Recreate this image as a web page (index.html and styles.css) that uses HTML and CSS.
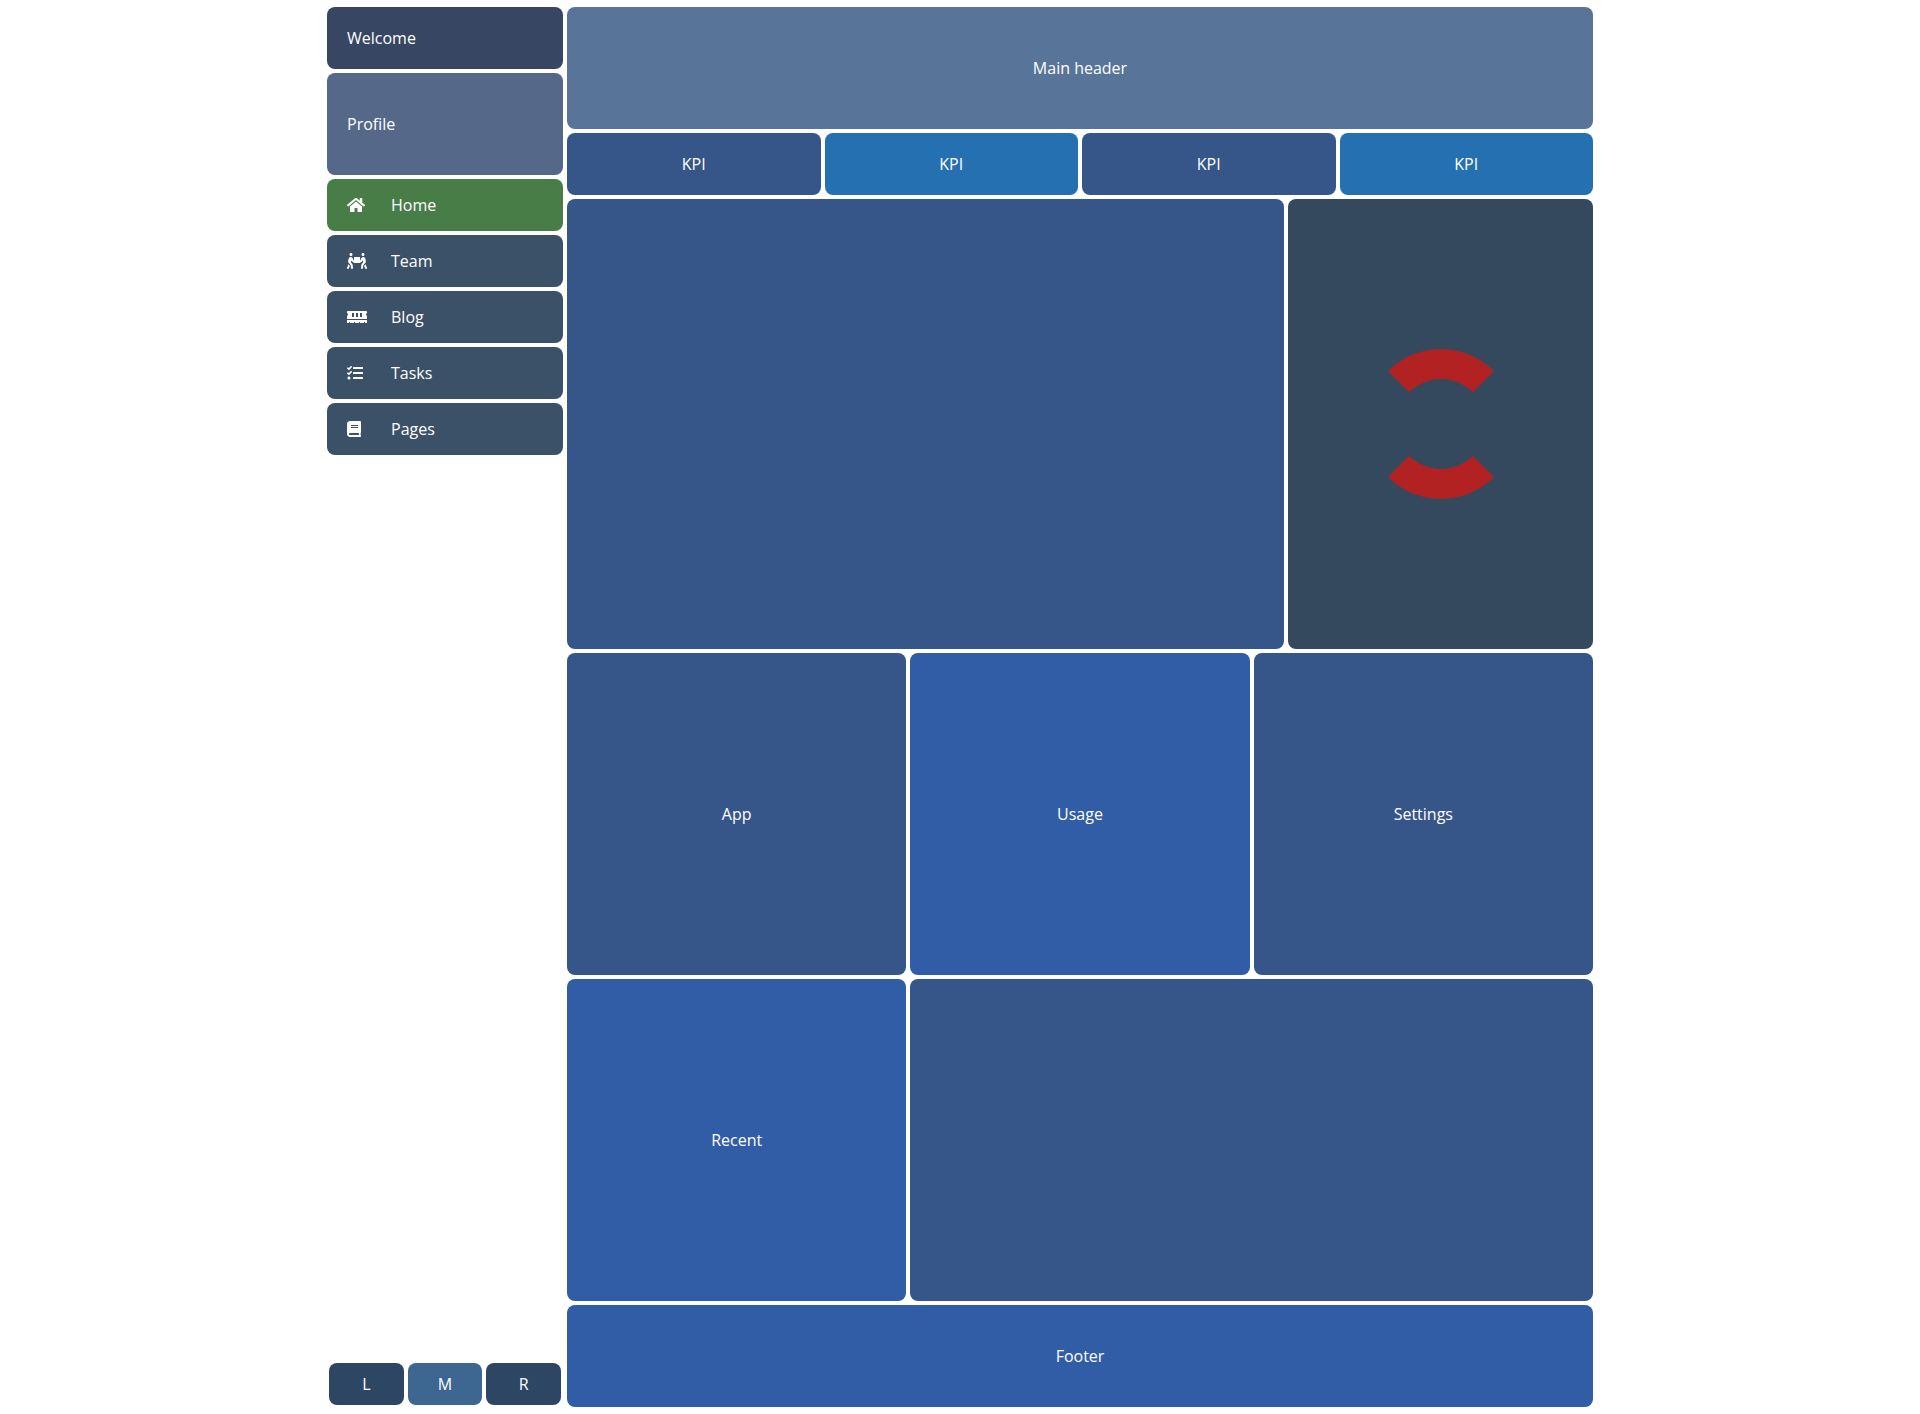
FILE: index.html
```html
<!DOCTYPE html>
<html lang="en">
<head>
  <meta charset="utf-8">
  <meta name="viewport" content="width=device-width, initial-scale=1">
  <title>Dashboard</title>
  <link rel="stylesheet" href="styles.css">
</head>
<body>
  <div class="page">
    <aside class="sidebar">
      <div class="tile tile-left welcome">Welcome</div>
      <div class="tile tile-left profile">Profile</div>
      <nav class="menu">
        <a class="menu-item active" href="#home">
          <span class="menu-icon"><svg width="18" height="16" viewBox="0 0 576 512" aria-hidden="true"><path d="M280.37 148.26L96 300.11V464a16 16 0 0 0 16 16l112.06-.29a16 16 0 0 0 15.92-16V368a16 16 0 0 1 16-16h64a16 16 0 0 1 16 16v95.64a16 16 0 0 0 16 16.05L464 480a16 16 0 0 0 16-16V300L295.67 148.26a12.19 12.19 0 0 0-15.3 0zM571.6 251.47L488 182.56V44.05a12 12 0 0 0-12-12h-56a12 12 0 0 0-12 12v72.61L318.47 43a48 48 0 0 0-61 0L4.34 251.47a12 12 0 0 0-1.6 16.9l25.5 31A12 12 0 0 0 45.15 301l235.22-193.74a12.19 12.19 0 0 1 15.3 0L530.9 301a12 12 0 0 0 16.9-1.6l25.5-31a12 12 0 0 0-1.7-16.93z"/></svg></span>
          Home
        </a>
        <a class="menu-item" href="#team">
          <span class="menu-icon"><svg width="20" height="16" viewBox="0 0 640 512" aria-hidden="true"><path d="M128 96c26.500 0 48-21.500 48-48S154.500 0 128 0 80 21.500 80 48s21.500 48 48 48zm384 0c26.500 0 48-21.500 48-48S538.500 0 512 0s-48 21.500-48 48 21.500 48 48 48zm125.700 372.100l-44-110-41.100 46.400-2 18.200 27.700 69.200c5 12.500 17 20.100 29.700 20.100 4 0 8-.7 11.900-2.300 16.400-6.600 24.400-25.200 17.800-41.600zm-34.200-209.800L585 178.100c-4.600-20-18.600-36.800-37.500-44.900-18.500-8-39-6.700-56.100 3.300-22.700 13.400-39.700 34.500-48.100 59.400L432 229.800 416 240v-96c0-8.800-7.200-16-16-16H240c-8.800 0-16 7.200-16 16v96l-16.100-10.200-11.300-33.900c-8.300-25-25.400-46-48.100-59.400-17.200-10-37.600-11.300-56.100-3.300-18.900 8.100-32.900 24.900-37.500 44.900l-18.400 80.200c-4.600 20 .7 41.200 14.400 56.700l67.200 75.900 10.100 92.600C130 499.800 143.800 512 160 512c1.200 0 2.300-.1 3.500-.2 17.600-1.900 30.200-17.700 28.300-35.300l-10.100-92.800c-1.500-13-6.900-25.100-15.600-35l-43.300-49 17.600-70.300 6.800 20.400c4.100 12.500 11.900 23.400 24.500 32.600l51.100 32.500c4.600 2.900 12.100 4.600 17.200 5h160c5.100-.4 12.600-2.100 17.200-5l51.100-32.500c12.600-9.200 20.400-20 24.500-32.600l6.800-20.400 17.600 70.300-43.300 49c-8.700 9.900-14.100 22-15.600 35l-10.100 92.800c-1.900 17.600 10.800 33.400 28.300 35.300 1.200.1 2.300.2 3.500.2 16.100 0 30-12.100 31.800-28.500l10.100-92.600 67.200-75.900c13.600-15.500 19-36.700 14.400-56.700zM46.300 358.100l-44 110c-6.600 16.400 1.400 35 17.800 41.600 16.800 6.600 35.100-1.700 41.600-17.800l27.700-69.200-2-18.200-41.100-46.400z"/></svg></span>
          Team
        </a>
        <a class="menu-item" href="#blog">
          <span class="menu-icon"><svg width="20" height="16" viewBox="0 0 640 512" aria-hidden="true"><path d="M640 130.940V96c0-17.670-14.330-32-32-32H32C14.330 64 0 78.330 0 96v34.940c18.600 6.610 32 24.190 32 45.060s-13.400 38.450-32 45.060V320h640v-98.940c-18.600-6.610-32-24.190-32-45.060s13.400-38.450 32-45.060zM224 256h-64V128h64v128zm128 0h-64V128h64v128zm128 0h-64V128h64v128zM0 448h64v-26.670c0-8.840 7.160-16 16-16s16 7.160 16 16V448h128v-26.670c0-8.840 7.160-16 16-16s16 7.160 16 16V448h128v-26.670c0-8.840 7.160-16 16-16s16 7.160 16 16V448h128v-26.670c0-8.840 7.160-16 16-16s16 7.160 16 16V448h64v-96H0v96z"/></svg></span>
          Blog
        </a>
        <a class="menu-item" href="#tasks">
          <span class="menu-icon"><svg width="16" height="16" viewBox="0 0 512 512" aria-hidden="true"><path d="M139.610 35.500a12 12 0 0 0-17 0L58.930 98.810l-22.700-22.120a12 12 0 0 0-17 0L3.530 92.410a12 12 0 0 0 0 17l47.590 47.400a12.780 12.780 0 0 0 17.610 0l15.590-15.620L156.520 69a12.090 12.090 0 0 0 .09-17zm0 159.190a12 12 0 0 0-17 0l-63.680 63.720-22.700-22.100a12 12 0 0 0-17 0L3.530 252a12 12 0 0 0 0 17L51 316.500a12.770 12.770 0 0 0 17.600 0l15.700-15.690 72.200-72.220a12 12 0 0 0 .09-16.900zM64 368c-26.490 0-48.590 21.500-48.590 48S37.530 464 64 464a48 48 0 0 0 0-96zm432 16H208a16 16 0 0 0-16 16v32a16 16 0 0 0 16 16h288a16 16 0 0 0 16-16v-32a16 16 0 0 0-16-16zm0-320H208a16 16 0 0 0-16 16v32a16 16 0 0 0 16 16h288a16 16 0 0 0 16-16V80a16 16 0 0 0-16-16zm0 160H208a16 16 0 0 0-16 16v32a16 16 0 0 0 16 16h288a16 16 0 0 0 16-16v-32a16 16 0 0 0-16-16z"/></svg></span>
          Tasks
        </a>
        <a class="menu-item" href="#pages">
          <span class="menu-icon"><svg width="14" height="16" viewBox="0 0 448 512" aria-hidden="true"><path d="M448 360V24c0-13.300-10.700-24-24-24H96C43 0 0 43 0 96v320c0 53 43 96 96 96h328c13.300 0 24-10.700 24-24v-16c0-7.500-3.500-14.300-8.900-18.700-4.200-15.400-4.200-59.300 0-74.700 5.400-4.300 8.900-11.100 8.900-18.600zM128 134c0-3.300 2.700-6 6-6h212c3.300 0 6 2.700 6 6v20c0 3.300-2.700 6-6 6H134c-3.300 0-6-2.700-6-6v-20zm0 64c0-3.300 2.700-6 6-6h212c3.300 0 6 2.700 6 6v20c0 3.300-2.700 6-6 6H134c-3.300 0-6-2.700-6-6v-20zm253.400 250H96c-17.700 0-32-14.300-32-32 0-17.600 14.400-32 32-32h285.400c-1.900 17.100-1.900 46.900 0 64z"/></svg></span>
          Pages
        </a>
      </nav>
      <div class="switcher">
        <button class="switch" type="button">L</button>
        <button class="switch switch-mid" type="button">M</button>
        <button class="switch" type="button">R</button>
      </div>
    </aside>

    <div class="content">
      <header class="tile header">Main header</header>
      <section class="row kpis">
        <div class="tile kpi">KPI</div>
        <div class="tile kpi kpi-alt">KPI</div>
        <div class="tile kpi">KPI</div>
        <div class="tile kpi kpi-alt">KPI</div>
      </section>
      <section class="row charts">
        <div class="tile chart-main"></div>
        <div class="tile chart-side"><div class="ring"></div></div>
      </section>
      <section class="row cards">
        <div class="tile card">App</div>
        <div class="tile card card-alt">Usage</div>
        <div class="tile card">Settings</div>
        <div class="tile card card-alt">Recent</div>
        <div class="tile card card-wide"></div>
      </section>
      <footer class="tile footer">Footer</footer>
    </div>
  </div>
</body>
</html>
```
FILE: styles.css
```css
*,
*::before,
*::after {
  box-sizing: border-box;
}

body {
  margin: 0;
  background: #fff;
  color: #fff;
  font: 16px/22px "Open Sans", "Noto Sans", sans-serif;
}

.page {
  display: grid;
  grid-template-columns: 236px minmax(0, 1fr);
  gap: 4px;
  max-width: 1280px;
  min-height: 100vh;
  margin: 0 auto;
  padding: 7px;
}

.tile {
  display: flex;
  align-items: center;
  justify-content: center;
  padding: 20px;
  border-radius: 8px;
}

.tile-left {
  justify-content: flex-start;
}

/* Sidebar */

.sidebar,
.menu,
.content {
  display: flex;
  flex-direction: column;
  gap: 4px;
}

.welcome {
  background: #364663;
}

.profile {
  min-height: 102px;
  background: #556889;
}

.menu-item {
  display: flex;
  align-items: center;
  padding: 15px 20px;
  border-radius: 8px;
  background: #3b5168;
  color: inherit;
  text-decoration: none;
}

.menu-item.active {
  background: #487d47;
}

.menu-icon {
  display: flex;
  width: 44px;
}

.menu-icon svg {
  fill: currentColor;
}

.switcher {
  display: flex;
  gap: 4px;
  margin-top: auto;
  padding: 2px;
}

.switch {
  flex: 1;
  padding: 10px;
  border: 0;
  border-radius: 8px;
  background: #2c4664;
  color: inherit;
  font: inherit;
  cursor: pointer;
}

.switch-mid {
  background: #3d6790;
}

/* Content */

.row {
  display: grid;
  gap: 4px;
}

.header {
  min-height: 122px;
  background: #587498;
}

.kpis {
  grid-template-columns: repeat(4, 1fr);
}

.kpi {
  background: #365689;
}

.kpi-alt {
  background: #2570b1;
}

.charts {
  grid-template-columns: repeat(10, 1fr);
  grid-auto-rows: 450px;
}

.chart-main {
  grid-column: span 7;
  background: #365689;
}

.chart-side {
  grid-column: span 3;
  background: #34495e;
}

.ring {
  width: 150px;
  height: 150px;
  border: 30px solid transparent;
  border-top-color: #b22222;
  border-bottom-color: #b22222;
  border-radius: 50%;
}

.cards {
  grid-template-columns: repeat(3, 1fr);
  grid-auto-rows: 322px;
}

.card {
  background: #365689;
}

.card-alt {
  background: #305da6;
}

.card-wide {
  grid-column: span 2;
}

.footer {
  min-height: 102px;
  background: #305da6;
}
```
